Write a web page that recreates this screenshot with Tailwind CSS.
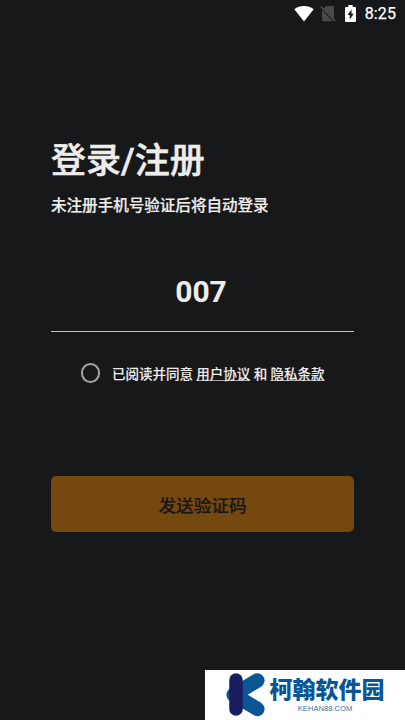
<!DOCTYPE html>
<html lang="zh-CN">
<head>
<meta charset="utf-8">
<meta name="viewport" content="width=device-width, initial-scale=1">
<title>登录/注册</title>
<script src="https://cdn.jsdelivr.net/npm/@tailwindcss/browser@4"></script>
</head>
<body class="relative h-[720px] w-[405px] overflow-hidden bg-[#17181a] font-['Roboto','Noto_Sans_CJK_SC',sans-serif] text-[#efedeb]">
  <header class="flex h-7 items-center justify-end pr-[9px] text-white">
    <svg class="mb-[2px] h-[17px] w-[20px]" viewBox="0 0 20 17" fill="currentColor"><path d="M.3 4.2C5.8-.2 14.2-.2 19.7 4.2L10 16.5z"/></svg>
    <svg class="mb-[1px] ml-[6px] h-[17px] w-[16px]" viewBox="0 0 16 17"><path d="M6 1h7q1 0 1 1v13.5q0 .8-1 .8H3q-1 0-1-.8V5z" fill="#48494b"/><path d="M1.5 2.9 15 16.4" stroke="#17181a" stroke-width="2.4"/><path d="M.8 1.5 15.3 16" stroke="#545557" stroke-width="1.4"/></svg>
    <svg class="mb-[1px] ml-[9px] h-[17px] w-[11px]" viewBox="0 0 11 17"><path d="M3.3 0h4.4v2H10q1 0 1 1v13q0 1-1 1H1q-1 0-1-1V3q0-1 1-1h2.3z" fill="#fff"/><path d="M6.5 4.5 2.5 10h2.3v4.5L8.7 8.8H6.5z" fill="#17181a"/></svg>
    <span class="ml-[9px] text-[16px] font-normal leading-7 tracking-[0.1px] [-webkit-text-stroke:0.25px_currentColor]">8:25</span>
  </header>
  <main class="mx-auto flex w-[303px] flex-col pt-[109px]">
    <h1 class="h-[50px] whitespace-nowrap text-[35px] font-medium leading-[50px] [-webkit-text-stroke:0.5px_currentColor]">登录/注册</h1>
    <p class="mt-[7px] h-6 whitespace-nowrap text-[15.55px] font-medium leading-6 [-webkit-text-stroke:0.2px_currentColor]">未注册手机号验证后将自动登录</p>
    <div class="mt-[54px] flex h-[60px] justify-center border-b-[1.5px] border-[#c6c5c3] pr-[3px] text-[30px] font-bold leading-10">007</div>
    <div class="mt-[30px] flex h-[22px] items-center pl-[29.5px] text-[13.5px] font-medium">
      <span class="h-[19.5px] w-[19.5px] shrink-0 rounded-full border-2 border-[#a3a3a3]"></span>
      <span class="ml-[12px] whitespace-nowrap pt-px leading-[22px] [-webkit-text-stroke:0.1px_currentColor]">已阅读并同意 <a class="underline decoration-[#aaa9a8] decoration-1 underline-offset-1">用户协议</a> 和 <a class="underline decoration-[#aaa9a8] decoration-1 underline-offset-1">隐私条款</a></span>
    </div>
    <button class="mt-[92px] h-[56px] w-full rounded-[5px] bg-[#75480f] pt-[5px] text-[17.6px] font-medium text-[#17181a] [-webkit-text-stroke:0.2px_currentColor]">发送验证码</button>
  </main>
  <aside class="absolute bottom-0 right-0 flex h-[50px] w-[200px] bg-white font-['Liberation_Sans','Noto_Sans_CJK_SC',sans-serif] text-[#0c5594]">
    <svg class="ml-[21px] mt-[3px] h-[44px] w-[39px] shrink-0" viewBox="0 0 39 44" fill="none" stroke-linecap="round"><path d="M31.3 7.5 7.7 21.7 31.3 35.9" stroke="#0c5594" stroke-width="14.5" stroke-linejoin="round"/><path d="M10 7V36" stroke="#191d60" stroke-width="13.5"/></svg>
    <div class="ml-[4px] flex w-[116px] flex-col items-center pt-[5px]">
      <span class="whitespace-nowrap text-[23px] font-black leading-[30px]">柯翰软件园</span>
      <span class="-mt-px pr-[4px] text-[7.6px] leading-[10px] text-[#3473a7]">KEHAN88.COM</span>
    </div>
  </aside>
</body>
</html>
